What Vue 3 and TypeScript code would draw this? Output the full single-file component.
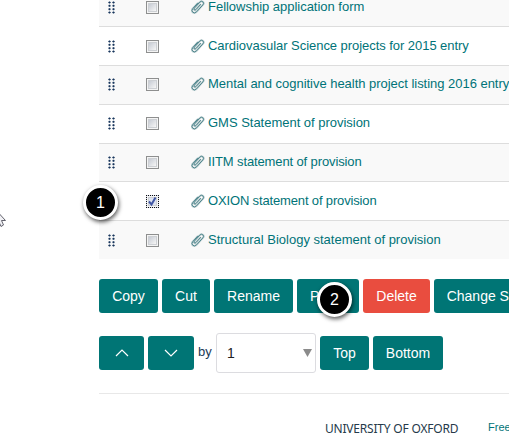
<script setup lang="ts">
interface Item {
  label: string
  height: number
  spacing: number
  checked?: boolean
  raised?: boolean
}

const items: Item[] = [
  { label: 'Fellowship application form', height: 26, spacing: -0.02 },
  { label: 'Cardiovasular Science projects for 2015 entry', height: 39, spacing: -0.05 },
  { label: 'Mental and cognitive health project listing 2016 entry', height: 39, spacing: -0.03, raised: true },
  { label: 'GMS Statement of provision', height: 39, spacing: -0.02, raised: true },
  { label: 'IITM statement of provision', height: 38, spacing: -0.12 },
  { label: 'OXION statement of provision', height: 39, spacing: -0.15, checked: true },
  { label: 'Structural Biology statement of provision', height: 39, spacing: 0 },
]

const actions = [
  { label: 'Copy', width: 59 },
  { label: 'Cut', width: 48 },
  { label: 'Rename', width: 79 },
  { label: 'Paste', width: 62, step: 2 },
  { label: 'Delete', width: 67, danger: true },
  { label: 'Change Status', width: 118 },
]
const dots = [0, 1, 2, 3]
</script>

<template>
  <div class="page">
    <svg class="cursor" width="7" height="18" viewBox="0 0 7 18">
      <path d="M-6 -6L5.5 6.5H1.5L3.5 11L1 12.5L-1 8" fill="#f1f1f5" stroke="#62626d" />
    </svg>
    <main class="content">
      <ul class="list">
        <li v-for="item in items" :key="item.label" class="row" :style="{ height: item.height + 'px' }">
          <div class="cells" :class="{ raised: item.raised }">
            <span class="handle">
              <svg v-if="!item.checked" width="7" height="13" viewBox="0 0 7 13">
                <g v-for="d in dots" :key="d" :transform="`translate(0 ${d * 3.33})`">
                  <path d="M0 1.5H3M4 1.5H7" stroke="#6e7f96" />
                  <path d="M1.5 .5V2.5M5.5 .5V2.5" stroke="#17355c" stroke-width="1.3" />
                </g>
              </svg>
            </span>
            <span class="check" :class="{ on: item.checked }">
              <svg v-if="item.checked" width="13" height="13" viewBox="0 0 13 13">
                <path d="M3 6.5L5.5 9.5L9.5 2.5" fill="none" stroke="#3f55a3" stroke-width="2" />
              </svg>
            </span>
            <svg class="clip" width="14" height="14" viewBox="0 0 14 14" fill="none">
              <path d="M9.8 4.2L5.2 9.3Q4 10.6 3.2 9.8Q2.5 9 3.6 7.8L8.8 2.1Q10.3.5 11.9 1.8Q13.4 3.2 11.9 4.9L5.6 11.8Q3.5 13.9 1.7 12.2Q0 10.5 1.8 8.5L7 2.8" stroke="#c3d3d5" stroke-width="2" />
              <path d="M9.8 4.2L5.2 9.3Q4 10.6 3.2 9.8Q2.5 9 3.6 7.8L8.8 2.1Q10.3.5 11.9 1.8Q13.4 3.2 11.9 4.9L5.6 11.8Q3.5 13.9 1.7 12.2Q0 10.5 1.8 8.5L7 2.8" stroke="#4f868d" />
            </svg>
            <a class="link" :style="{ letterSpacing: item.spacing + 'px' }">{{ item.label }}</a>
          </div>
          <span v-if="item.checked" class="badge first">1</span>
        </li>
      </ul>

      <div class="actions">
        <button v-for="a in actions" :key="a.label" class="btn" :class="{ danger: a.danger }" :style="{ width: a.width + 'px' }">
          {{ a.label }}<span v-if="a.step" class="badge second">{{ a.step }}</span>
        </button>
      </div>

      <div class="move">
        <button class="btn up"><svg width="14" height="8" viewBox="0 0 14 8"><path d="M1 7L7 1L13 7" /></svg></button>
        <button class="btn down"><svg width="14" height="8" viewBox="0 0 14 8"><path d="M1 1L7 7L13 1" /></svg></button>
        <span class="by">by</span>
        <div class="select"><span>1</span><svg width="9" height="8" viewBox="0 0 9 8"><path d="M0 0H9L4.5 8Z" fill="#8b8b8b" /></svg></div>
        <button class="btn top">Top</button>
        <button class="btn bottom">Bottom</button>
      </div>

      <footer class="footer">
        <span class="uni">UNIVERSITY OF OXFORD</span>
        <a class="free">Freedom</a>
      </footer>
    </main>
  </div>
</template>

<style>
body { background: #fff; overflow: hidden; }
</style>

<style scoped>
.page {
  position: relative;
  width: 509px;
  height: 434px;
  overflow: hidden;
  font-family: "Liberation Sans", Arial, sans-serif;
  font-size: 13px;
  color: #1d3b56;
}
.cursor { position: absolute; left: 0; top: 214px; }
.content { margin-left: 99px; width: 410px; }
.list { list-style: none; margin: 0; padding: 0; }
.row {
  position: relative;
  box-sizing: border-box;
  display: flex;
  align-items: flex-end;
  background: #fff;
}
.row + .row { border-top: 1px solid #ddd; }
.row:nth-child(odd) { background: #f9f9f9; }
.cells { height: 38px; flex: none; display: flex; align-items: center; white-space: nowrap; }
.raised { margin-bottom: 1px; }
.handle { width: 47px; height: 13px; padding-left: 9px; box-sizing: border-box; display: flex; }
.check {
  box-sizing: border-box;
  width: 13px;
  height: 13px;
  border: 1px solid #8e8f8f;
  background: linear-gradient(135deg, #b9bfca, #f5f5f5 80%);
  box-shadow: inset 0 0 0 1px #f4f4f4, inset 0 0 0 2px #cdd0d4;
  flex: none;
}
.check.on { border: 1px dotted #111; background: #dce2f0; }
.check.on svg { display: block; margin: -1px; }
.clip { margin-left: 32px; margin-right: 3px; flex: none; }
.link { color: #007378; line-height: 16px; }
.badge {
  position: absolute;
  box-sizing: border-box;
  width: 35px;
  height: 35px;
  border: 3px solid #fff;
  border-radius: 50%;
  background: #000;
  color: #fff;
  font-size: 16px;
  line-height: 29px;
  text-align: center;
  box-shadow: 1px 2px 4px rgba(0, 0, 0, .65);
  z-index: 2;
}
.first { left: -16px; top: 3px; }
.second { left: 20px; top: 3px; }
.actions { display: flex; gap: 4px; margin-top: 20px; }
.btn {
  position: relative;
  box-sizing: border-box;
  height: 34px;
  flex: none;
  display: flex;
  align-items: center;
  justify-content: center;
  padding: 0;
  border: 0;
  border-radius: 3px;
  background: #007575;
  color: #fff;
  font: 14px/20px "Liberation Sans", Arial, sans-serif;
  white-space: nowrap;
}
.danger { background: #e94d3f; }
.move { display: flex; align-items: center; margin-top: 20px; height: 40px; }
.btn path { fill: none; stroke: #fff; stroke-width: 1.2; }
.up { width: 45px; margin-right: 4px; }
.down { width: 46px; margin-right: 4px; }
.by { width: 18px; font-size: 13px; line-height: 20px; margin-top: -3px; }
.select {
  box-sizing: border-box;
  width: 100px;
  height: 40px;
  display: flex;
  align-items: center;
  justify-content: space-between;
  padding: 0 3px 0 10px;
  margin-right: 4px;
  border: 1px solid #dcdce0;
  border-radius: 3px;
  font-size: 14px;
  color: #222;
}
.top { width: 49px; margin-right: 4px; }
.bottom { width: 70px; }
.footer {
  display: flex;
  margin-top: 20px;
  border-top: 1px solid #e8e8e8;
  padding: 26px 0 0 226px;
  white-space: nowrap;
}
.uni { flex: none; width: 163px; font: 12px/18px "Noto Sans", sans-serif; letter-spacing: -.2px; color: #25394a; }
.free { font-size: 11px; line-height: 14px; color: #007378; }
</style>
